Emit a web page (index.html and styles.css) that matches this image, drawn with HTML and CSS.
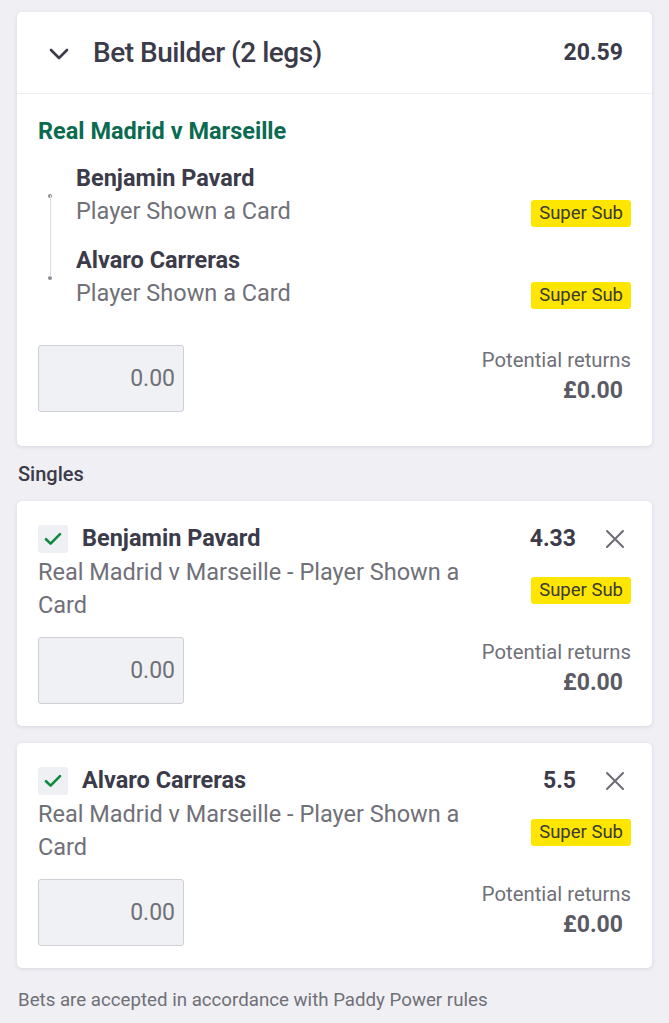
FILE: index.html
```html
<!DOCTYPE html>
<html lang="en">
<head>
<meta charset="utf-8">
<title>Betslip</title>
<link rel="stylesheet" href="styles.css">
</head>
<body>
<main class="slip">
  <section class="card bb">
    <header class="bb-head">
      <svg class="chev" width="20" height="12" viewBox="0 0 20 12"><path d="M2 2 L10 10 L18 2" fill="none" stroke="#3b3b4a" stroke-width="2.6" stroke-linecap="round" stroke-linejoin="round"/></svg>
      <span class="bb-title">Bet Builder (2 legs)</span>
      <span class="bb-odds">20.59</span>
    </header>
    <div class="bb-body">
      <div class="event">Real Madrid v Marseille</div>
      <div class="legs">
        <div class="leg first">
          <div class="leg-mark"></div>
          <div class="leg-info">
            <div class="name">Benjamin Pavard</div>
            <div class="leg-row">
              <span class="desc">Player Shown a Card</span>
              <span class="badge">Super Sub</span>
            </div>
          </div>
        </div>
        <div class="leg last">
          <div class="leg-mark"></div>
          <div class="leg-info">
            <div class="name">Alvaro Carreras</div>
            <div class="leg-row">
              <span class="desc">Player Shown a Card</span>
              <span class="badge">Super Sub</span>
            </div>
          </div>
        </div>
      </div>
      <div class="stake-row">
        <div class="stake">0.00</div>
        <div class="returns">
          <div class="ret-label">Potential returns</div>
          <div class="ret-val">£0.00</div>
        </div>
      </div>
    </div>
  </section>

  <h2 class="section-label">Singles</h2>

  <section class="card single">
    <div class="single-head">
      <span class="check"><svg width="18" height="14" viewBox="0 0 18 14"><path d="M2 7.2 L6.6 11.6 L16 2.2" fill="none" stroke="#0f8a3c" stroke-width="2.6" stroke-linecap="round" stroke-linejoin="round"/></svg></span>
      <span class="name">Benjamin Pavard</span>
      <span class="s-odds">4.33</span>
      <span class="close"><svg width="20" height="20" viewBox="0 0 20 20"><path d="M2 2 L18 18 M18 2 L2 18" stroke="#6b6b74" stroke-width="2" stroke-linecap="round"/></svg></span>
    </div>
    <div class="single-row">
      <span class="desc wide">Real Madrid v Marseille - Player Shown a Card</span>
      <span class="badge">Super Sub</span>
    </div>
    <div class="stake-row s">
      <div class="stake">0.00</div>
      <div class="returns">
        <div class="ret-label">Potential returns</div>
        <div class="ret-val">£0.00</div>
      </div>
    </div>
  </section>

  <section class="card single">
    <div class="single-head">
      <span class="check"><svg width="18" height="14" viewBox="0 0 18 14"><path d="M2 7.2 L6.6 11.6 L16 2.2" fill="none" stroke="#0f8a3c" stroke-width="2.6" stroke-linecap="round" stroke-linejoin="round"/></svg></span>
      <span class="name">Alvaro Carreras</span>
      <span class="s-odds">5.5</span>
      <span class="close"><svg width="20" height="20" viewBox="0 0 20 20"><path d="M2 2 L18 18 M18 2 L2 18" stroke="#6b6b74" stroke-width="2" stroke-linecap="round"/></svg></span>
    </div>
    <div class="single-row">
      <span class="desc wide">Real Madrid v Marseille - Player Shown a Card</span>
      <span class="badge">Super Sub</span>
    </div>
    <div class="stake-row s">
      <div class="stake">0.00</div>
      <div class="returns">
        <div class="ret-label">Potential returns</div>
        <div class="ret-val">£0.00</div>
      </div>
    </div>
  </section>

  <p class="footer">Bets are accepted in accordance with Paddy Power rules</p>
</main>
</body>
</html>
```

FILE: styles.css
```css
* { box-sizing: border-box; }
html, body { margin: 0; padding: 0; }
body {
  background: #efeff4;
  font-family: Roboto, "Noto Sans", "Liberation Sans", sans-serif;
  color: #3b3b4a;
  width: 669px;
  height: 1023px;
  overflow: hidden;
}
.slip { padding: 12px 17px 0 17px; }

.card {
  background: #ffffff;
  border-radius: 5px;
  box-shadow: 0 1px 4px rgba(40, 40, 70, 0.12);
}

.bb-head {
  display: flex;
  align-items: center;
  height: 82px;
  padding: 0 29px 0 32px;
  border-bottom: 1px solid #eeeef2;
}
.chev { flex: none; margin-right: 24px; margin-top: 2px; }
.bb-title {
  font-size: 28px;
  font-weight: 500;
  letter-spacing: -0.5px;
  flex: 1;
}
.bb-odds { font-size: 23px; font-weight: 700; }

.bb-body { padding: 23px 21px 34px 21px; }
.event {
  color: #0b6b50;
  font-weight: 700;
  font-size: 23.5px;
  line-height: 28px;
  margin-bottom: 17px;
}
.legs { display: flex; flex-direction: column; gap: 16px; }
.leg { display: flex; position: relative; }
.leg-mark { width: 38px; flex: none; position: relative; }
.leg-mark::before {
  content: "";
  position: absolute;
  left: 10px;
  top: calc(50% - 1px);
  width: 4px;
  height: 4px;
  border-radius: 50%;
  background: #8a8a92;
}
.leg.first .leg-mark::after {
  content: "";
  position: absolute;
  left: 11.5px;
  top: 50%;
  width: 1px;
  height: calc(50% + 16px);
  background: #dcdce2;
}
.leg.last .leg-mark::after {
  content: "";
  position: absolute;
  left: 11.5px;
  top: 0;
  width: 1px;
  height: 50%;
  background: #dcdce2;
}
.leg-info { flex: 1; }
.name {
  font-weight: 700;
  font-size: 23.5px;
  line-height: 33px;
}
.leg-row { display: flex; align-items: center; justify-content: space-between; }
.desc {
  color: #707078;
  font-size: 23.5px;
  line-height: 33px;
}
.badge {
  flex: none;
  background: #ffe600;
  color: #3a3a30;
  font-size: 18.5px;
  line-height: 27px;
  padding: 0 8px;
  border-radius: 3px;
  margin-top: 3px;
}

.stake-row {
  display: flex;
  align-items: center;
  justify-content: space-between;
  margin-top: 35px;
}
.stake-row.s { margin-top: 15px; }
.stake {
  width: 146px;
  height: 67px;
  background: #f0f1f5;
  border: 1px solid #cfd0d6;
  border-radius: 3px;
  display: flex;
  align-items: center;
  justify-content: flex-end;
  padding-right: 8px;
  font-size: 23px;
  color: #707078;
}
.returns { text-align: right; }
.ret-label { color: #707078; font-size: 20.3px; line-height: 24px; }
.ret-val { font-weight: 700; font-size: 23px; line-height: 38px; color: #5a5a64; padding-right: 8px; }

.section-label {
  margin: 16px 0 15px 1px;
  font-size: 20px;
  font-weight: 500;
  line-height: 24px;
}

.single { padding: 20px 21px 22px 21px; margin-bottom: 17px; }
.single-head { display: flex; align-items: center; height: 35px; }
.check {
  width: 30px;
  height: 28px;
  background: #eef0f3;
  border-radius: 3px;
  display: flex;
  align-items: center;
  justify-content: center;
  margin-right: 14px;
  flex: none;
}
.single-head .name { flex: 1; font-size: 23.5px; }
.s-odds { font-weight: 700; font-size: 23px; }
.close { width: 20px; height: 20px; margin-left: 29px; margin-right: 6px; display: flex; }
.single-row { display: flex; align-items: center; justify-content: space-between; }
.desc.wide { width: 450px; }

.footer {
  margin: 21px 0 0 1px;
  font-size: 18.7px;
  line-height: 22px;
  color: #707078;
}
```
